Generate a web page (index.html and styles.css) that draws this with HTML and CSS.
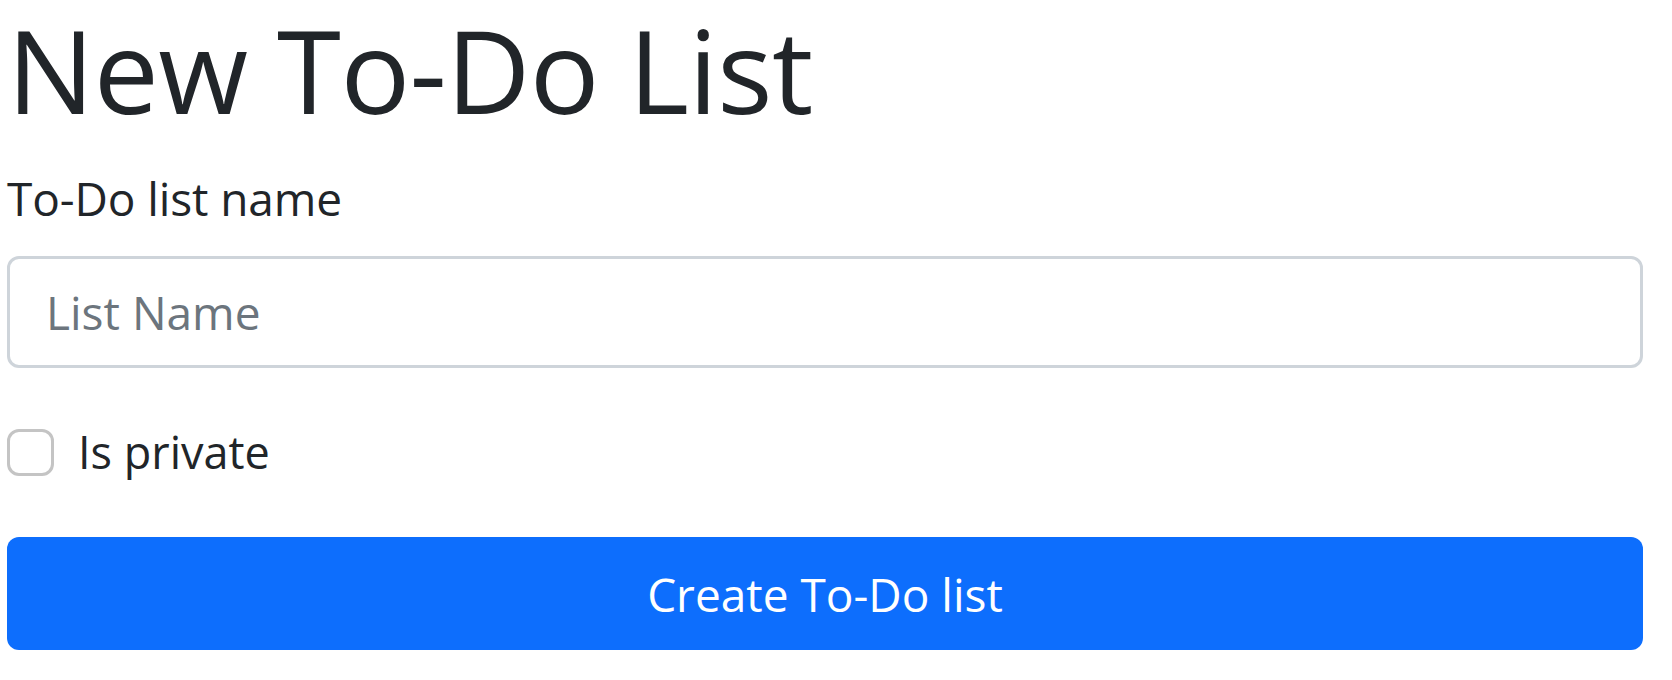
FILE: index.html
```html
<!DOCTYPE html>
<html lang="en">
<head>
<meta charset="utf-8">
<title>New To-Do List</title>
<link rel="stylesheet" href="styles.css">
</head>
<body>
<main class="page">
  <h1 class="title">New To-Do List</h1>
  <form class="form">
    <label class="form-label" for="name">To-Do list name</label>
    <input class="form-control" id="name" type="text" placeholder="List Name">
    <div class="form-check">
      <input class="check-input" id="private" type="checkbox">
      <label class="check-label" for="private">Is private</label>
    </div>
    <button class="btn" type="button">Create To-Do list</button>
  </form>
</main>
</body>
</html>
```

FILE: styles.css
```css
html, body {
  margin: 0;
  padding: 0;
  background: #ffffff;
}

body {
  font-family: "Open Sans", "Noto Sans", sans-serif;
  color: #212529;
}

.page {
  width: 1636px;
  margin-left: 7px;
}

.title {
  margin: 0 0 24px 0;
  font-size: 116px;
  font-weight: 400;
  line-height: 138px;
  letter-spacing: -0.6px;
}

.form {
  display: flex;
  flex-direction: column;
}

.form-label {
  font-size: 46px;
  line-height: 72px;
  margin-bottom: 22px;
  letter-spacing: -0.1px;
}

.form-control {
  box-sizing: border-box;
  width: 100%;
  height: 112px;
  border: 3px solid #ced4da;
  border-radius: 12px;
  padding: 0 36px;
  font-family: inherit;
  font-size: 46px;
  color: #212529;
  outline: none;
  margin: 0 0 48px 0;
}

.form-control::placeholder {
  color: #6c757d;
}

.form-check {
  display: flex;
  align-items: center;
  gap: 24px;
  height: 72px;
  margin-bottom: 49px;
}

.check-input {
  appearance: none;
  -webkit-appearance: none;
  box-sizing: border-box;
  width: 47px;
  height: 47px;
  margin: 0;
  border: 3px solid #c4c4c4;
  border-radius: 12px;
  background: #fff;
  flex: none;
}

.check-label {
  font-size: 45px;
  line-height: 72px;
}

.btn {
  box-sizing: border-box;
  width: 100%;
  height: 113px;
  border: none;
  border-radius: 12px;
  background: #0d6efd;
  color: #ffffff;
  font-family: inherit;
  font-size: 46px;
  line-height: 72px;
  padding: 0;
  cursor: pointer;
}
```
